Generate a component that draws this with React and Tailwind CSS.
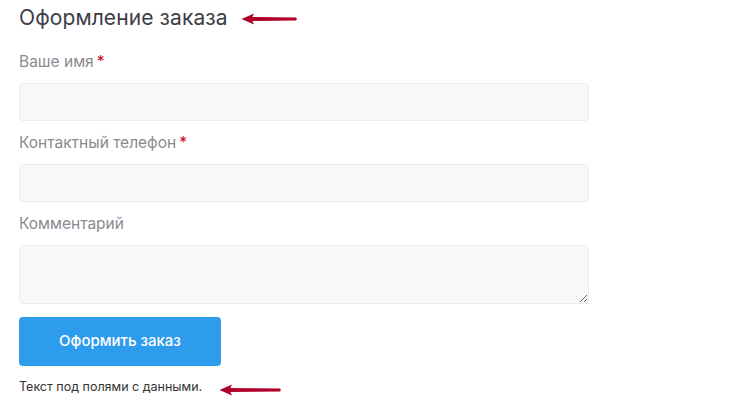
import React from "react";

function Arrow({ className, width = 58 }) {
  const w = width;
  return (
    <svg className={className} width={w} height="12" viewBox={`0 0 ${w} 12`} fill="none">
      <path d={`M10 4 L${w - 2} 4.6 Q${w - 0.5} 6 ${w - 2} 7.4 L10 8 Z`} fill="#b0002a" />
      <path d="M0.5 6 L13 0.5 L10.5 6 L13 11.5 Z" fill="#b0002a" />
    </svg>
  );
}

function Field({ label, required, children }) {
  return (
    <div className="flex flex-col">
      <label className="text-[15.5px] leading-[22px] text-[#8a8a8f] mb-[10px]">
        {label}
        {required && <span className="text-[#d0021b] ml-[3px]">*</span>}
      </label>
      {children}
    </div>
  );
}

export default function App() {
  return (
    <div
      className="w-[740px] h-[407px] bg-white pl-[19px] pt-[4px]"
      style={{ fontFamily: "Inter, 'Noto Sans', sans-serif" }}
    >
      <div className="flex items-center">
        <h1 className="text-[21px] leading-[28px] tracking-[0.1px] text-[#3d3d48] font-normal">Оформление заказа</h1>
        <Arrow className="ml-[13px] mt-[2px]" width={57} />
      </div>
      <div className="w-[570px] flex flex-col gap-[11px] mt-[19px]">
        <Field label="Ваше имя" required>
          <input className="h-[38px] w-full rounded-[4px] border border-[#ececec] bg-[#f8f8f8] outline-none" />
        </Field>
        <Field label="Контактный телефон" required>
          <input className="h-[38px] w-full rounded-[4px] border border-[#ececec] bg-[#f8f8f8] outline-none" />
        </Field>
        <Field label="Комментарий">
          <textarea className="h-[59px] w-full rounded-[4px] border border-[#ececec] bg-[#f8f8f8] outline-none block" />
        </Field>
      </div>
      <button className="mt-[13px] w-[202px] h-[49px] rounded-[4px] bg-[#2e9cec] text-white text-[15px] font-medium">
        Оформить заказ
      </button>
      <div className="flex items-center mt-[12px]">
        <p className="text-[12.5px] leading-[18px] text-[#333]">Текст под полями с данными.</p>
        <Arrow className="ml-[17px] mt-[5px]" width={63} />
      </div>
    </div>
  );
}
